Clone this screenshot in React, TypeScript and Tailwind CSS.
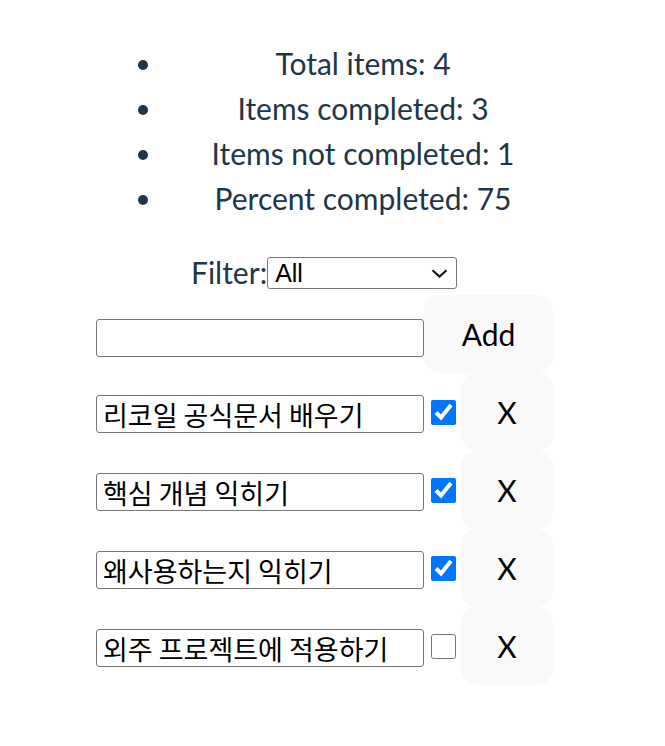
import { useState } from "react";

type Todo = { id: number; text: string; done: boolean };

const initial: Todo[] = [
  { id: 1, text: "리코일 공식문서 배우기", done: true },
  { id: 2, text: "핵심 개념 익히기", done: true },
  { id: 3, text: "왜사용하는지 익히기", done: true },
  { id: 4, text: "외주 프로젝트에 적용하기", done: false },
];

export default function App() {
  const [todos, setTodos] = useState<Todo[]>(initial);
  const [draft, setDraft] = useState("");
  const [filter, setFilter] = useState("All");

  const total = todos.length;
  const completed = todos.filter((t) => t.done).length;
  const percent = total ? Math.round((completed / total) * 100) : 0;

  const shown = todos.filter((t) =>
    filter === "Completed" ? t.done : filter === "Uncompleted" ? !t.done : true
  );

  return (
    <div className="min-h-screen bg-white text-[#213547] font-['Lato','Open_Sans',sans-serif]">
      <div className="pt-[41px]">
        {/* Stats */}
        <ul className="list-disc pl-[165px] pr-[104px] text-center text-[30px] leading-[45px]">
          <li>Total items: {total}</li>
          <li>Items completed: {completed}</li>
          <li>Items not completed: {total - completed}</li>
          <li>Percent completed: {percent}</li>
        </ul>

        {/* Filter */}
        <div className="mt-[29px] flex h-[45px] items-center pl-[191px]">
          <span className="text-[30px] leading-[45px]">Filter:</span>
          <div className="relative">
            <select
              value={filter}
              onChange={(e) => setFilter(e.target.value)}
              className="h-[32px] w-[190px] appearance-none rounded-[3px] border border-[#767676] bg-white pl-[7px] text-[25px] leading-[30px] text-black font-['Liberation_Sans',Arial,sans-serif]"
            >
              <option>All</option>
              <option>Completed</option>
              <option>Uncompleted</option>
            </select>
            <svg
              className="pointer-events-none absolute right-[9px] top-[12px]"
              width="17"
              height="9"
              viewBox="0 0 17 9"
              fill="none"
            >
              <path d="M1.5 1.2 L8.5 7.6 L15.5 1.2" stroke="#111" strokeWidth="2" />
            </svg>
          </div>
        </div>

        {/* New item */}
        <div className="flex items-center pl-[96px]">
          <input
            value={draft}
            onChange={(e) => setDraft(e.target.value)}
            className="mt-[7px] h-[38px] w-[328px] rounded-[3px] border border-[#767676] px-[6px] text-[27px] text-black font-['Noto_Sans_CJK_KR',sans-serif]"
          />
          <button
            onClick={() => {
              if (!draft.trim()) return;
              setTodos([...todos, { id: Date.now(), text: draft, done: false }]);
              setDraft("");
            }}
            className="h-[78px] w-[129px] rounded-[16px] bg-[#f9f9f9] text-[30px] text-black"
          >
            Add
          </button>
        </div>

        {/* Items */}
        {shown.map((t) => (
          <div key={t.id} className="flex items-center pl-[96px]">
            <input
              value={t.text}
              onChange={(e) =>
                setTodos(todos.map((x) => (x.id === t.id ? { ...x, text: e.target.value } : x)))
              }
              className="mt-[4px] h-[38px] w-[328px] rounded-[3px] border border-[#767676] px-[6px] text-[27px] leading-[36px] text-black font-['Noto_Sans_CJK_KR',sans-serif]"
            />
            <input
              type="checkbox"
              checked={t.done}
              onChange={() =>
                setTodos(todos.map((x) => (x.id === t.id ? { ...x, done: !x.done } : x)))
              }
              className="ml-[7px] mr-[5px] h-[25px] w-[25px] accent-[#0075ff]"
            />
            <button
              onClick={() => setTodos(todos.filter((x) => x.id !== t.id))}
              className="h-[78px] w-[92px] rounded-[16px] bg-[#f9f9f9] text-[30px] text-black"
            >
              X
            </button>
          </div>
        ))}
      </div>
    </div>
  );
}
